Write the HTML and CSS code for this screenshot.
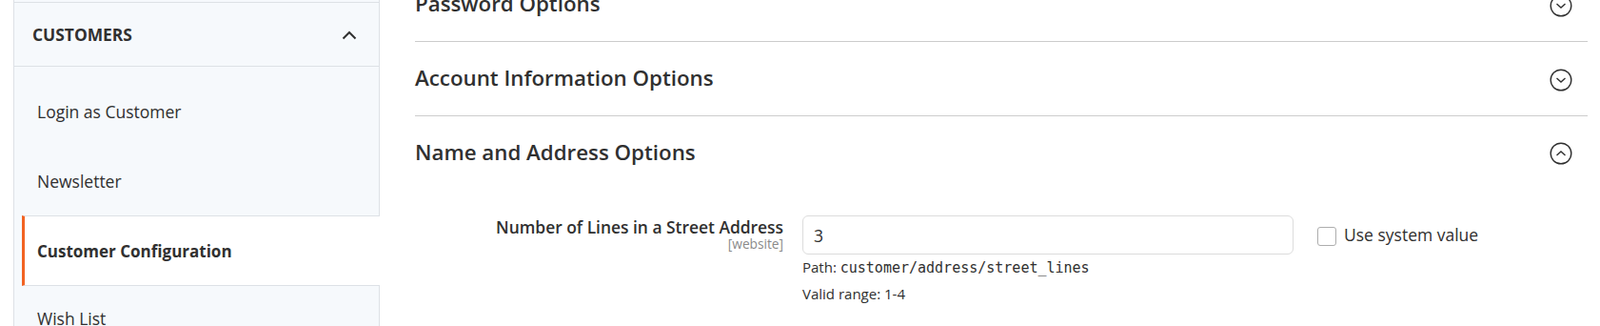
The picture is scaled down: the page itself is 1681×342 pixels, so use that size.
FILE: index.html
```html
<!DOCTYPE html>
<html lang="en">
<head>
    <meta charset="UTF-8">
    <title>Configuration - Customer Configuration</title>
    <link rel="stylesheet" href="styles.css">
</head>
<body>
    <div class="page">
        <aside class="config-nav">
            <div class="nav-prev"></div>
            <div class="nav-title">
                <span>Customers</span>
                <svg class="nav-chevron" width="16" height="10" viewBox="0 0 16 10">
                    <path d="M1.5 8.5 L8 2 L14.5 8.5" fill="none" stroke="#303030" stroke-width="2"/>
                </svg>
            </div>
            <ul class="nav-list">
                <li class="nav-item">Login as Customer</li>
                <li class="nav-item">Newsletter</li>
                <li class="nav-item active">Customer Configuration</li>
                <li class="nav-item">Wish List</li>
            </ul>
        </aside>

        <main class="config-main">
            <div class="section">
                <h3>Password Options</h3>
                <svg class="toggle" width="24" height="24" viewBox="0 0 24 24">
                    <circle cx="12" cy="12" r="10.8" fill="none" stroke="#303030" stroke-width="1.4"/>
                    <path d="M7.5 10 L12 14 L16.5 10" fill="none" stroke="#303030" stroke-width="1.4"/>
                </svg>
            </div>
            <div class="section">
                <h3>Account Information Options</h3>
                <svg class="toggle" width="24" height="24" viewBox="0 0 24 24">
                    <circle cx="12" cy="12" r="10.8" fill="none" stroke="#303030" stroke-width="1.4"/>
                    <path d="M7.5 10 L12 14 L16.5 10" fill="none" stroke="#303030" stroke-width="1.4"/>
                </svg>
            </div>
            <div class="section open">
                <h3>Name and Address Options</h3>
                <svg class="toggle" width="24" height="24" viewBox="0 0 24 24">
                    <circle cx="12" cy="12" r="10.8" fill="none" stroke="#303030" stroke-width="1.4"/>
                    <path d="M7.5 14 L12 10 L16.5 14" fill="none" stroke="#303030" stroke-width="1.4"/>
                </svg>
            </div>

            <div class="field-row">
                <div class="field-label">
                    <label>Number of Lines in a Street Address</label>
                    <span class="scope">[website]</span>
                </div>
                <div class="field-control">
                    <input class="input-text" type="text" value="3">
                    <p class="note">Path: <code>customer/address/street_lines</code></p>
                    <p class="note">Valid range: 1-4</p>
                </div>
                <label class="use-default">
                    <span class="checkbox"></span>
                    <span>Use system value</span>
                </label>
            </div>
        </main>
    </div>
</body>
</html>
```

FILE: styles.css
```css
body {
    margin: 0;
    font-family: 'Open Sans', 'Noto Sans', sans-serif;
    color: #303030;
    background: #fff;
    overflow: hidden;
}
.page {
    display: grid;
    grid-template-columns: 385px 1fr;
    column-gap: 37px;
    padding: 0 13px 0 14px;
    margin-top: -34px;
}

/* left config nav */
.config-nav {
    background: #f6f9fc;
    border-left: 1px solid #dde1e6;
    border-right: 1px solid #dde1e6;
    height: 420px;
}
.nav-prev {
    height: 36px;
    border-bottom: 1px solid #dde1e6;
}
.nav-title {
    height: 66px;
    border-bottom: 1px solid #dde1e6;
    display: flex;
    align-items: center;
    justify-content: space-between;
    padding: 0 23px 0 19px;
    font-size: 17.4px;
    font-weight: 700;
    text-transform: uppercase;
}
.nav-chevron {
    margin-top: 2px;
}
.nav-list {
    list-style: none;
    margin: 0;
    padding: 10px 0 0;
}
.nav-item {
    height: 73px;
    display: flex;
    align-items: center;
    padding-left: 24px;
    font-size: 17.5px;
}
.nav-item:last-child {
    align-items: flex-start;
    padding-top: 22px;
    box-sizing: border-box;
}
.nav-item.active {
    margin: 0 -1px 0 8px;
    padding-left: 13px;
    height: 72px;
    background: #fff;
    border-left: 3px solid #f26322;
    border-top: 1px solid #dde1e6;
    border-bottom: 1px solid #dde1e6;
    font-weight: 700;
    font-size: 17px;
}

/* main column */
.section {
    height: 77px;
    border-bottom: 1px solid #cccccc;
    display: flex;
    align-items: center;
    justify-content: space-between;
    padding-right: 16px;
}
.section.open {
    border-bottom: none;
    height: 76px;
}
.section h3 {
    margin: 0 0 2px;
    font-size: 22.3px;
    font-weight: 600;
}
.toggle {
    margin-top: 2px;
}

.field-row {
    display: flex;
    align-items: flex-start;
    margin-top: 28px;
}
.field-label {
    width: 387px;
    text-align: right;
    padding-top: 2px;
}
.field-label label {
    display: block;
    font-size: 17.4px;
    font-weight: 600;
    line-height: 20px;
}
.scope {
    display: block;
    font-size: 13.7px;
    color: #8a8a8a;
    line-height: 16px;
}
.field-control {
    width: 516px;
    margin-left: 20px;
}
.input-text {
    box-sizing: border-box;
    width: 100%;
    height: 41px;
    border: 1px solid #dcdcdc;
    border-radius: 6px;
    padding: 0 11px;
    font-family: 'Open Sans', sans-serif;
    font-size: 17.5px;
    color: #303030;
}
.note {
    margin: 3px 0 0;
    font-size: 15px;
    line-height: 20px;
}
.note + .note {
    margin-top: 7px;
}
.note code {
    font-family: 'DejaVu Sans Mono', monospace;
    font-size: 15px;
}
.use-default {
    display: flex;
    align-items: flex-start;
    gap: 8px;
    margin-left: 25px;
    margin-top: 9px;
    font-size: 17.5px;
    line-height: 22px;
}
.checkbox {
    box-sizing: border-box;
    width: 20px;
    height: 20px;
    margin-top: 3px;
    border: 1px solid #adadad;
    border-radius: 3px;
    background: #fff;
}
```
